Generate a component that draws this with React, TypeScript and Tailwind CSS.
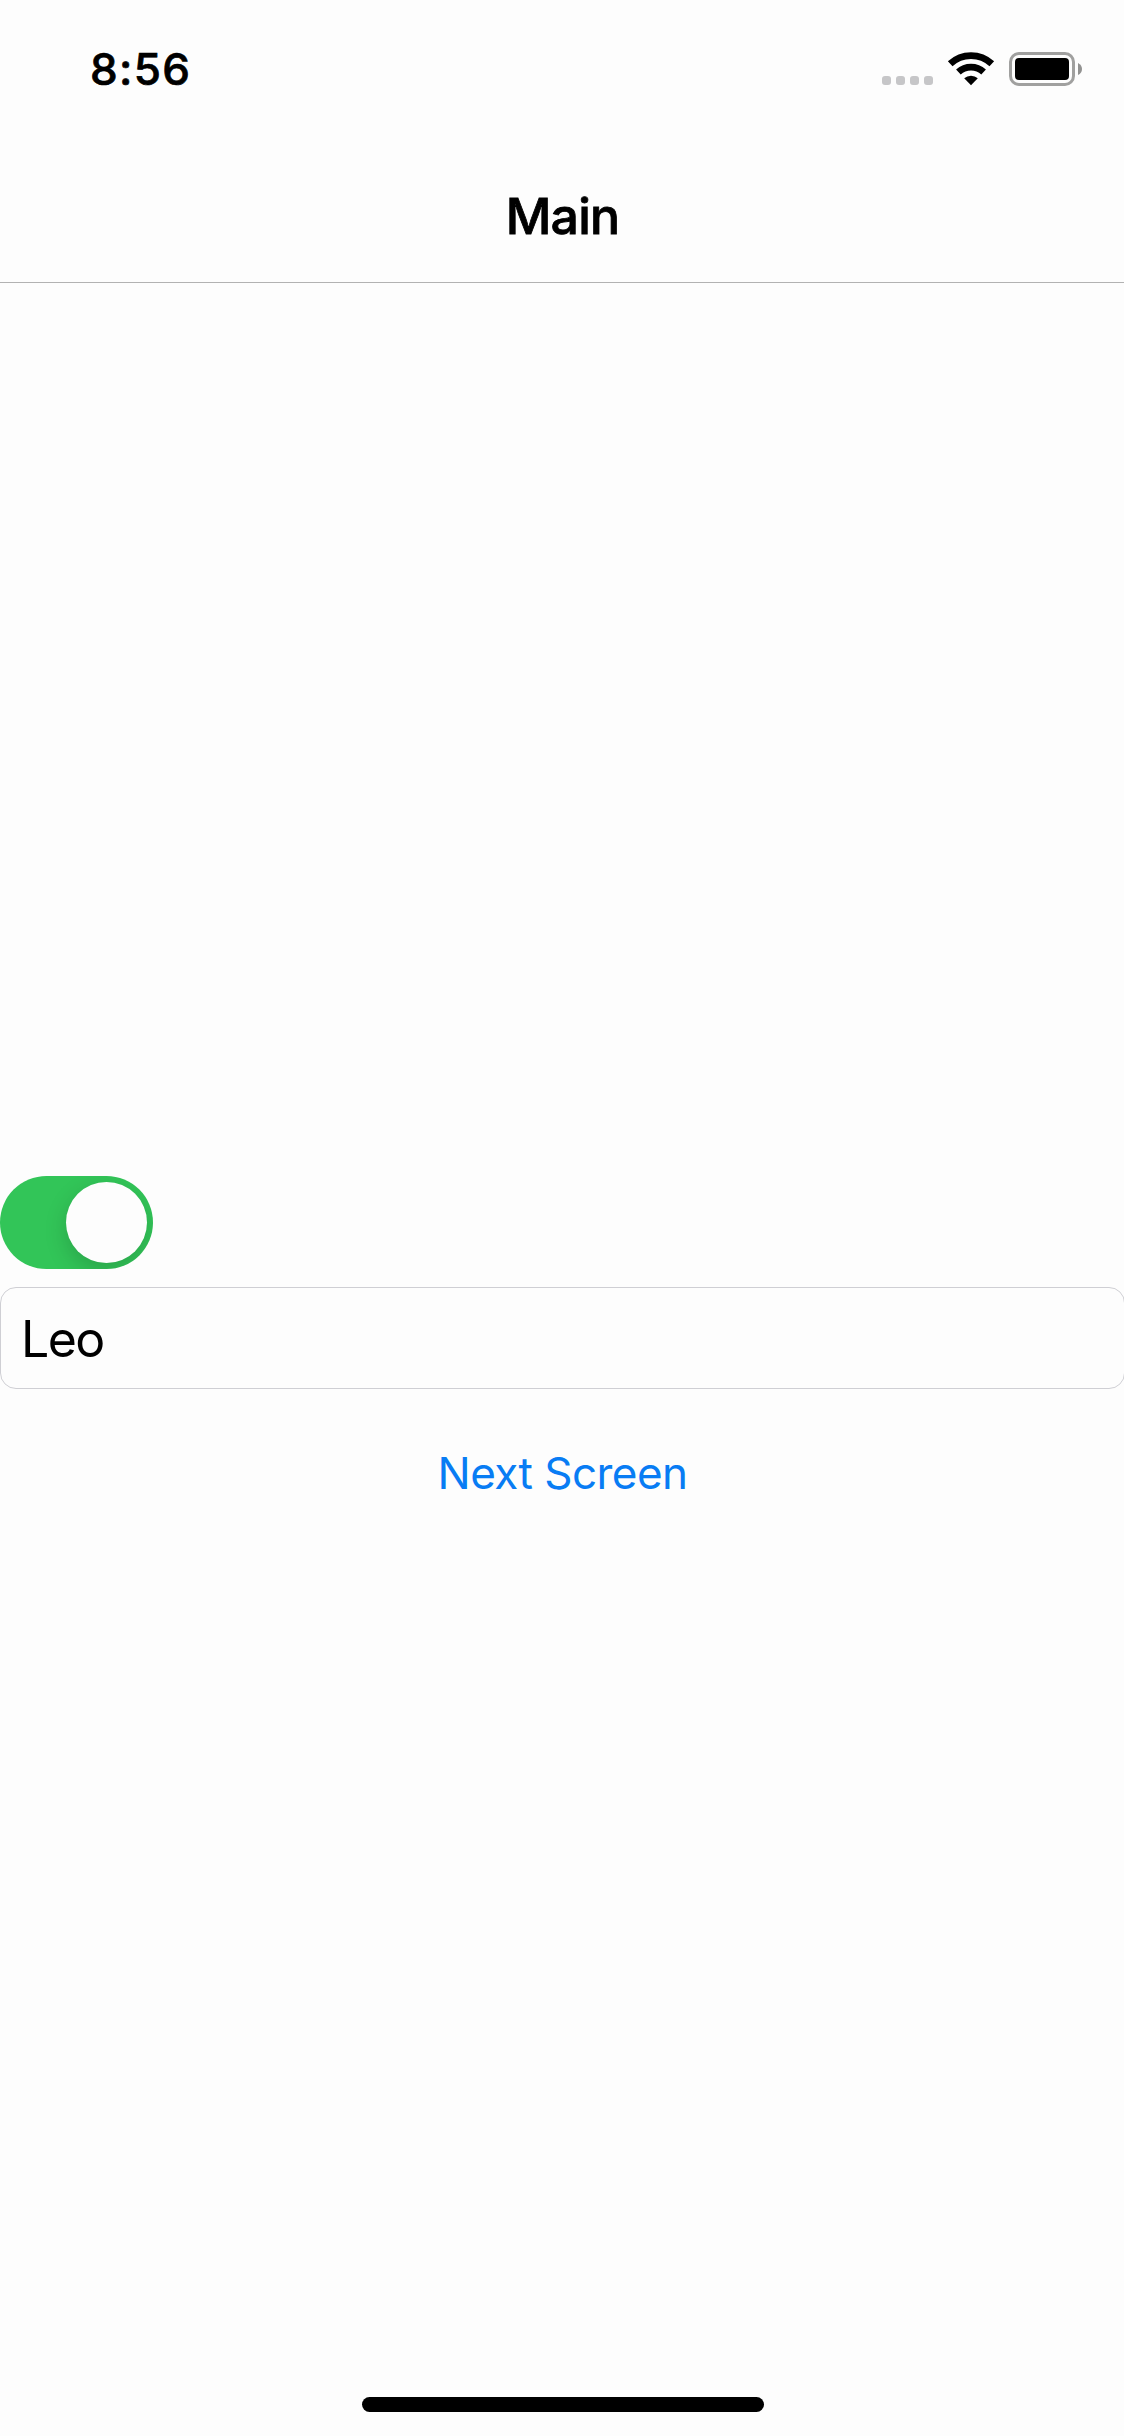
import React, { useState } from "react";

function StatusIcons() {
  return (
    <svg width="202" height="36" viewBox="0 0 202 36" aria-label="Wi-Fi connected, battery full">
      <g fill="#c6c6c8">
        <rect x="0" y="25" width="9" height="9" rx="3" />
        <rect x="14" y="25" width="9" height="9" rx="3" />
        <rect x="28" y="25" width="9" height="9" rx="3" />
        <rect x="42" y="25" width="9" height="9" rx="3" />
      </g>
      <g fill="none" stroke="#000" strokeWidth="6.8">
        <path d="M68.2 12.8A30.5 30.5 0 0 1 109.8 12.8" />
        <path d="M76.4 21A18.5 18.5 0 0 1 101.6 21" />
      </g>
      <path d="M82.2 27.2A10.4 10.4 0 0 1 95.8 27.2L89 34.3Z" fill="#000" />
      <rect x="128.5" y="2.5" width="63" height="31" rx="8.5" fill="none" stroke="#a0a09f" strokeWidth="3" />
      <rect x="133" y="7" width="54" height="22" rx="4" fill="#000" />
      <path d="M196 12Q200 14 200 18Q200 22 196 24Z" fill="#929291" />
    </svg>
  );
}

export default function App() {
  const [on, setOn] = useState(true);
  const [name, setName] = useState("Leo");
  return (
    <div className="flex h-[2436px] w-[1124px] flex-col overflow-hidden bg-[#fdfdfd] font-[Inter,sans-serif] text-black">
      <header className="flex h-[283px] shrink-0 flex-col border-b border-[#b2b2b2]">
        <div className="flex h-[138px] items-center justify-between pr-[40px] pl-[90px]">
          <time className="text-[44px] leading-[54px] font-medium tracking-[1.3px] [-webkit-text-stroke:0.7px_black]">8:56</time>
          <StatusIcons />
        </div>
        <h1 className="mt-[48px] pl-px text-center text-[50px] leading-[60px] font-medium tracking-[-0.8px] [-webkit-text-stroke:0.8px_black]">Main</h1>
      </header>
      <main className="flex flex-1 flex-col items-start pt-[893px]">
        <button
          type="button"
          role="switch"
          aria-checked={on}
          aria-label="Toggle"
          onClick={() => setOn(!on)}
          className={`flex h-[93px] w-[153px] items-center overflow-hidden rounded-full px-[6px] ${on ? "justify-end bg-[#32c558]" : "justify-start bg-[#e9e9ea]"}`}
        >
          <span className="size-[81px] rounded-full bg-[#fdfdfd] shadow-[0_8px_22px_rgba(0,0,0,0.17)]" />
        </button>
        <input
          aria-label="Name"
          value={name}
          onChange={(e) => setName(e.target.value)}
          className="mt-[18px] h-[102px] w-[1125px] rounded-[16px] border border-[#cfcfd4] pt-[2px] pr-5 pl-[20px] text-[50px] tracking-[-1.6px] outline-none"
        />
        <button type="button" className="mt-[54px] self-center pl-px text-[44px] leading-[60px] tracking-[-0.55px] text-[#087cf4]">
          Next Screen
        </button>
      </main>
      <footer className="flex justify-center pb-[24px] pl-[2px]">
        <div className="h-[15px] w-[402px] rounded-full bg-black" />
      </footer>
    </div>
  );
}
